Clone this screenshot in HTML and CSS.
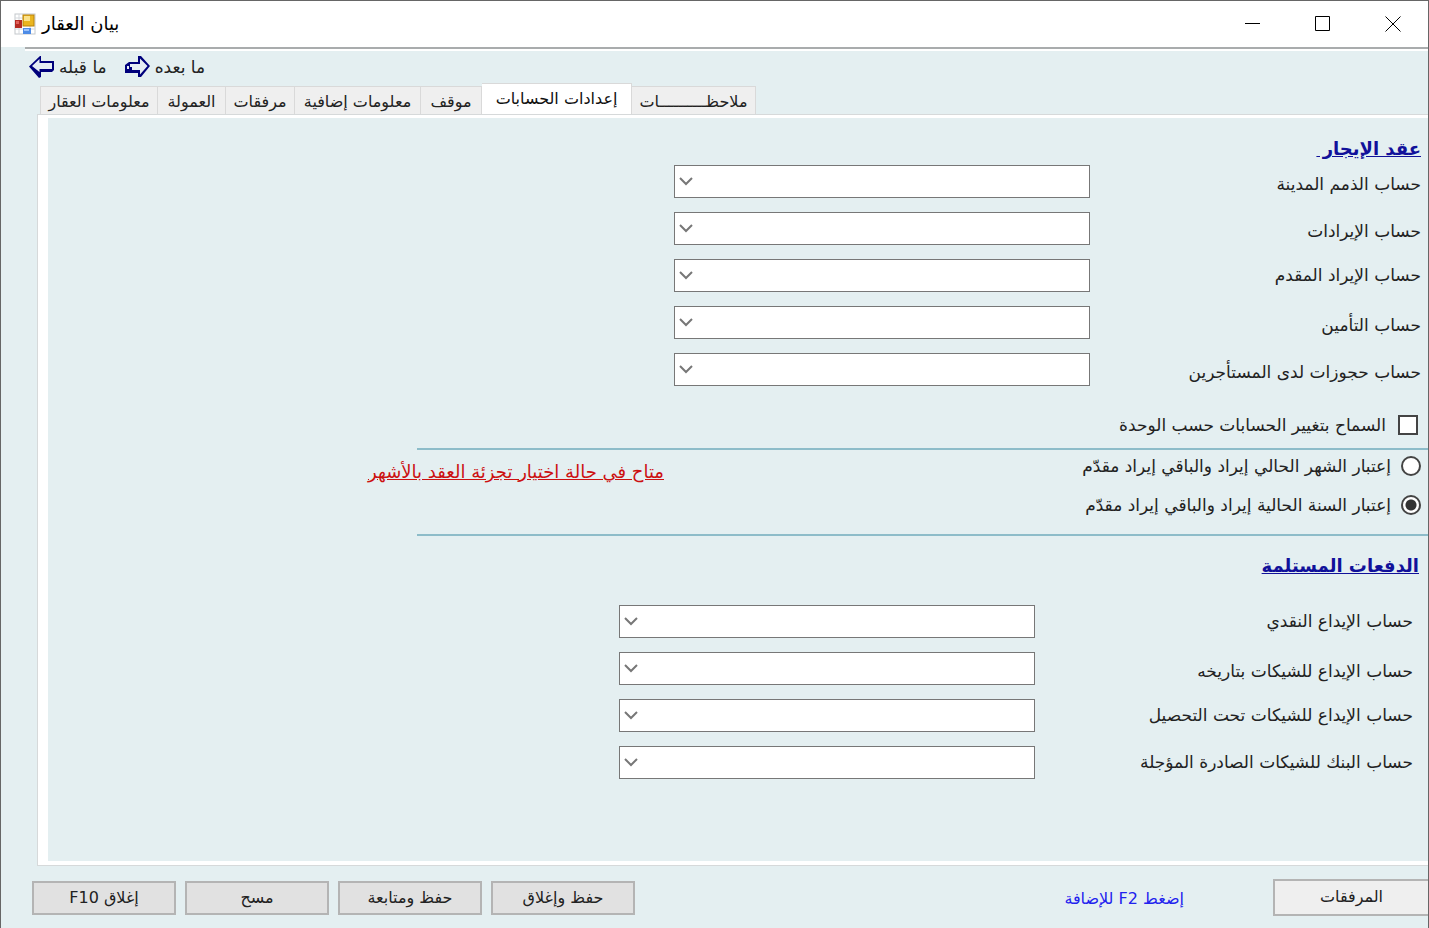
FILE: index.html
```html
<!DOCTYPE html>
<html lang="ar">
<head>
<meta charset="utf-8">
<title>بيان العقار</title>
<link rel="stylesheet" href="styles.css">
</head>
<body>
<div class="window">
  <header class="titlebar">
    <svg class="app-icon" viewBox="0 0 22 22" width="22" height="22" aria-hidden="true">
      <rect x="1" y="1" width="20" height="20" fill="#fff" stroke="#c4c8cc"/>
      <path d="M1 5h20M1 16h20M5 1v20M16 1v20" stroke="#d5d8dc"/>
      <rect x="1" y="7" width="7" height="8" fill="#b52a22"/><rect x="2" y="8" width="3" height="3" fill="#e0605a"/>
      <rect x="9" y="2" width="11" height="11" fill="#eab520" stroke="#b98208"/><rect x="10" y="3" width="6" height="5" fill="#fbe28a"/>
      <rect x="9" y="15" width="8" height="6" fill="#4d8be6"/><rect x="10" y="16" width="5" height="2" fill="#9cc2fa"/>
    </svg>
    <h1 class="title" dir="rtl">بيان العقار</h1>
    <div class="caption-buttons">
      <button class="caption" type="button" aria-label="تصغير"><svg viewBox="0 0 16 16" width="16" height="16"><path d="M0 7.500h15"/></svg></button>
      <button class="caption" type="button" aria-label="تكبير"><svg viewBox="0 0 16 16" width="16" height="16"><path d="M.5 .5h14v14h-14z"/></svg></button>
      <button class="caption" type="button" aria-label="إغلاق"><svg viewBox="0 0 16 16" width="16" height="16"><path d="M.5 .5l15 15M15.500 .5l-15 15"/></svg></button>
    </div>
  </header>

  <nav class="toolbar">
    <button class="nav-button" type="button">
      <svg viewBox="0 0 26 22" width="26" height="22" aria-hidden="true"><path d="M0 10.500L11 0h1v5h13v9l-2 2H12v5l-2 1z" fill="#00007c"/><path d="M3 10L10.500 3v4H23v6H10.500v3z" fill="#e6edf4"/></svg>
      <span dir="rtl">ما قبله</span>
    </button>
    <button class="nav-button" type="button">
      <svg viewBox="0 0 26 22" width="26" height="22" aria-hidden="true"><path d="M0 9l4-3h9V0h3l9 10-9 11h-3v-4H0z" fill="#00007c"/><path d="M5 8h10V2.500l7.500 7.500-7.500 8.500V14H7v-3H5z" fill="#e6edf4"/><path d="M2 10h2v3H2z" fill="#e6edf4"/></svg>
      <span dir="rtl">ما بعده</span>
    </button>
  </nav>

  <div class="tabs" role="tablist">
    <button class="tab tab-property" type="button" role="tab" dir="rtl">معلومات العقار</button>
    <button class="tab tab-commission" type="button" role="tab" dir="rtl">العمولة</button>
    <button class="tab tab-files" type="button" role="tab" dir="rtl">مرفقات</button>
    <button class="tab tab-extra" type="button" role="tab" dir="rtl">معلومات إضافية</button>
    <button class="tab tab-parking" type="button" role="tab" dir="rtl">موقف</button>
    <button class="tab tab-accounts active" type="button" role="tab" aria-selected="true" dir="rtl">إعدادات الحسابات</button>
    <button class="tab tab-notes" type="button" role="tab" dir="rtl">ملاحظــــــــــات</button>
  </div>

  <main class="panel" dir="rtl">
    <section class="accounts">
      <h2 class="heading">عقد الإيجار&nbsp;</h2>
      <div class="rows">
        <div class="row"><label for="receivable">حساب الذمم المدينة</label><div class="combo"><select id="receivable"><option></option></select><svg class="chevron" viewBox="0 0 14 9" width="14" height="9"><path d="M1 1l6 6 6-6"/></svg></div></div>
        <div class="row"><label for="revenue">حساب الإيرادات</label><div class="combo"><select id="revenue"><option></option></select><svg class="chevron" viewBox="0 0 14 9" width="14" height="9"><path d="M1 1l6 6 6-6"/></svg></div></div>
        <div class="row centered"><label for="prepaid">حساب الإيراد المقدم</label><div class="combo"><select id="prepaid"><option></option></select><svg class="chevron" viewBox="0 0 14 9" width="14" height="9"><path d="M1 1l6 6 6-6"/></svg></div></div>
        <div class="row"><label for="deposit">حساب التأمين</label><div class="combo"><select id="deposit"><option></option></select><svg class="chevron" viewBox="0 0 14 9" width="14" height="9"><path d="M1 1l6 6 6-6"/></svg></div></div>
        <div class="row"><label for="holds">حساب حجوزات لدى المستأجرين</label><div class="combo"><select id="holds"><option></option></select><svg class="chevron" viewBox="0 0 14 9" width="14" height="9"><path d="M1 1l6 6 6-6"/></svg></div></div>
      </div>
      <label class="check"><input type="checkbox"><span>السماح بتغيير الحسابات حسب الوحدة</span></label>
    </section>

    <section class="recognition">
      <div class="choices">
        <label class="choice"><input type="radio" name="period"><span>إعتبار الشهر الحالي إيراد والباقي إيراد مقدّم</span></label>
        <label class="choice"><input type="radio" name="period" checked><span>إعتبار السنة الحالية إيراد والباقي إيراد مقدّم</span></label>
      </div>
      <p class="hint">متاح في حالة اختيار تجزئة العقد بالأشهر</p>
    </section>

    <section class="payments">
      <h2 class="heading">الدفعات المستلمة</h2>
      <div class="rows">
        <div class="row centered"><label for="cash">حساب الإيداع النقدي</label><div class="combo"><select id="cash"><option></option></select><svg class="chevron" viewBox="0 0 14 9" width="14" height="9"><path d="M1 1l6 6 6-6"/></svg></div></div>
        <div class="row"><label for="dated">حساب الإيداع للشيكات بتاريخه</label><div class="combo"><select id="dated"><option></option></select><svg class="chevron" viewBox="0 0 14 9" width="14" height="9"><path d="M1 1l6 6 6-6"/></svg></div></div>
        <div class="row centered"><label for="collection">حساب الإيداع للشيكات تحت التحصيل</label><div class="combo"><select id="collection"><option></option></select><svg class="chevron" viewBox="0 0 14 9" width="14" height="9"><path d="M1 1l6 6 6-6"/></svg></div></div>
        <div class="row centered"><label for="bank">حساب البنك للشيكات الصادرة المؤجلة</label><div class="combo"><select id="bank"><option></option></select><svg class="chevron" viewBox="0 0 14 9" width="14" height="9"><path d="M1 1l6 6 6-6"/></svg></div></div>
      </div>
    </section>
  </main>

  <footer class="actions">
    <button class="action" type="button" dir="rtl">إغلاق F10</button>
    <button class="action" type="button" dir="rtl">مسح</button>
    <button class="action" type="button" dir="rtl">حفظ ومتابعة</button>
    <button class="action" type="button" dir="rtl">حفظ وإغلاق</button>
    <p class="shortcut" dir="rtl">إضغط F2 للإضافة</p>
    <button class="attachments" type="button" dir="rtl">المرفقات</button>
  </footer>
</div>
</body>
</html>
```
FILE: styles.css
```css
* { box-sizing: border-box; }
body {
  margin: 0;
  font-family: "DejaVu Sans", sans-serif;
  font-size: 16px;
  line-height: 24px;
  color: #222;
}
button, select, input { font: inherit; color: inherit; margin: 0; }
h1, h2, p { margin: 0; }

.window {
  display: flex;
  flex-direction: column;
  min-height: 100vh;
  background: #e4eff1;
  border: 1px solid #666;
  border-bottom: 0;
}

.titlebar {
  display: flex;
  align-items: center;
  height: 46px;
  padding-left: 13px;
  background: #fff;
}
.title {
  margin-left: 6px;
  font-size: 18px;
  font-weight: 400;
  color: #000;
}
.caption-buttons { display: flex; margin-left: auto; }
.caption {
  display: grid;
  place-items: center;
  width: 70px;
  height: 46px;
  padding: 0;
  border: 0;
  background: none;
}
.caption svg { fill: none; stroke: #000; stroke-width: 1; }

.toolbar {
  display: flex;
  gap: 18px;
  height: 39px;
  margin-left: 24px;
  padding: 4px;
  border-top: 2px solid #a9acad;
  box-shadow: inset 0 2px #fff;
  font-size: 17px;
}
.nav-button {
  display: flex;
  align-items: center;
  gap: 4px;
  height: 28px;
  padding: 0;
  border: 0;
  background: none;
}

.tabs {
  display: flex;
  align-items: flex-end;
  margin: -3px 0 0 39px;
  height: 31px;
}
.tab {
  height: 28px;
  padding: 2px 0 0;
  background: #efefef;
  border: 1px solid #d9d9d9;
  border-left-width: 0;
  border-bottom: 0;
  white-space: nowrap;
}
.tab.active { height: 31px; padding: 0; background: #fff; color: #111; }
.tab-property { width: 118px; border-left-width: 1px; }
.tab-commission { width: 68px; }
.tab-files { width: 69px; }
.tab-extra { width: 126px; }
.tab-parking { width: 61px; }
.tab-accounts { width: 150px; }
.tab-notes { width: 124px; }

.panel {
  flex: 1;
  margin-left: 36px;
  padding-top: 20px;
  background: #e4eff1;
  border: 1px solid #d6d9da;
  border-right: 0;
  box-shadow: inset 10px 0 #fff, inset 0 3px #fff, inset 0 -4px #fff;
  font-size: 17px;
}
.heading {
  font-size: 18px;
  font-weight: 700;
  line-height: 28px;
  color: #11119a;
  text-decoration: underline;
}
.accounts { padding-right: 7px; }
.rows { display: grid; gap: 14px; }
.accounts .rows { margin-top: 2px; }
.row { display: flex; align-items: flex-end; }
.row.centered { align-items: center; }
.row label { width: 331px; padding-bottom: 2px; }
.combo { display: grid; align-items: center; width: 416px; }
.combo select, .chevron { grid-area: 1 / 1; }
.combo select {
  width: 100%;
  height: 33px;
  appearance: none;
  background: #fff;
  border: 1px solid #777;
  outline: 0;
  border-radius: 0;
}
.chevron {
  justify-self: end;
  margin-left: 5px;
  fill: none;
  stroke: #777;
  stroke-width: 2;
  pointer-events: none;
}

.check, .choice { display: flex; align-items: center; }
.check { gap: 12px; margin-top: 27px; padding-right: 3px; }
.check input, .choice input {
  appearance: none;
  width: 20px;
  height: 20px;
  background: #fff;
  border: 2px solid #444;
}
.choice input { border-radius: 50%; }
.choice input:checked { background: radial-gradient(circle, #333 5px, #fff 6px); }

.recognition {
  display: flex;
  position: relative;
  height: 88px;
  margin-top: 11px;
}
.recognition::before, .recognition::after {
  content: "";
  position: absolute;
  right: 0;
  width: 1011px;
  height: 2px;
  background: #8dbcc9;
}
.recognition::before { top: 0; }
.recognition::after { bottom: 0; }
.choices { display: grid; gap: 15px; align-content: start; width: 764px; padding: 6px 7px 0 0; }
.choice { gap: 10px; }
.hint { margin-top: 12px; font-size: 18px; color: #cc1111; text-decoration: underline; }

.payments { padding-right: 9px; margin-top: 16px; }
.payments .rows { margin: 25px 6px 0 0; }
.payments .row label { width: 378px; }

.actions {
  display: flex;
  align-items: center;
  gap: 9px;
  height: 62px;
  padding-left: 31px;
}
.action {
  width: 144px;
  height: 34px;
  margin-bottom: -2px;
  padding: 0;
  background: #e1e1e1;
  border: 2px solid #b4b4b4;
}
.shortcut { margin: 4px 80px 0 auto; color: #2222ee; }
.attachments {
  width: 155px;
  height: 37px;
  padding: 0;
  background: #efefef;
  border: 2px solid #b4b4b4;
  border-right: 0;
}
```
